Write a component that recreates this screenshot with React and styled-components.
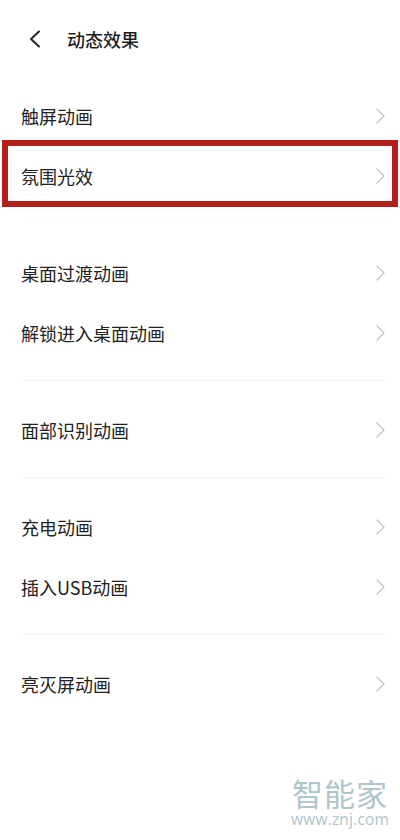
import React from "react";
import styled, { createGlobalStyle } from "styled-components";

const GlobalStyle = createGlobalStyle`
  html, body { margin: 0; padding: 0; background: #ffffff; }
  body { font-family: "Noto Sans CJK SC", "Noto Sans", sans-serif; }
  * { box-sizing: border-box; }
`;

const Screen = styled.div`
  position: relative;
  width: 400px;
  height: 840px;
  background: #ffffff;
  overflow: hidden;
`;

const Header = styled.header`
  display: flex;
  align-items: center;
  height: 77px;
  padding-left: 28px;
  gap: 26px;
`;

const BackButton = styled.button`
  display: flex;
  align-items: center;
  justify-content: center;
  width: 13px;
  height: 18px;
  padding: 0;
  border: 0;
  background: transparent;
  color: #262626;
`;

const Title = styled.h1`
  margin: 0;
  font-size: 18px;
  font-weight: 500;
  color: #1f1f1f;
  line-height: 1;
`;

const Group = styled.section`
  padding-top: ${(p) => p.$pt ?? 19}px;
  padding-bottom: ${(p) => p.$pb ?? 17}px;
`;

const Divider = styled.div`
  height: 1px;
  margin: 0 12px 0 22px;
  background: ${(p) => (p.$faint ? "#fbfbfb" : "#f4f4f4")};
`;

const Row = styled.div`
  position: relative;
  display: flex;
  align-items: center;
  justify-content: space-between;
  height: 60px;
  padding: 0 15px 0 21px;

  ${(p) =>
    p.$highlight &&
    `
    &::after {
      content: "";
      position: absolute;
      left: 2px;
      right: 2px;
      top: -6px;
      bottom: -1px;
      border: 6px solid #b31f1a;
      pointer-events: none;
    }
  `}
`;

const Label = styled.span`
  font-size: 18px;
  color: #222222;
  line-height: 1;
  letter-spacing: 0;
`;

const Chevron = styled.svg`
  width: 9px;
  height: 16px;
  color: #c6c6c6;
`;

const Watermark = styled.div`
  position: absolute;
  left: 291px;
  top: 776px;
  display: flex;
  flex-direction: column;
  align-items: center;
  color: #aec5ca;
  pointer-events: none;
`;

const MarkName = styled.div`
  font-size: 31px;
  line-height: 34px;
  letter-spacing: 1px;
  font-weight: 400;
`;

const MarkUrl = styled.div`
  font-family: "Open Sans", "Liberation Sans", sans-serif;
  font-size: 15.5px;
  line-height: 18px;
  letter-spacing: 0.2px;
`;

const BackIcon = () => (
  <svg width="13" height="18" viewBox="0 0 13 18" fill="none">
    <path d="M11 1.5 L3 9 L11 16.5" stroke="currentColor" strokeWidth="2" strokeLinecap="round" strokeLinejoin="round" />
  </svg>
);

const ArrowRight = () => (
  <Chevron viewBox="0 0 9 16" fill="none">
    <path d="M1 1 L8 8 L1 15" stroke="currentColor" strokeWidth="1.4" strokeLinecap="round" strokeLinejoin="round" />
  </Chevron>
);

const groups = [
  { items: ["触屏动画", "氛围光效"], pt: 9, pb: 13, highlight: 1 },
  { items: ["桌面过渡动画", "解锁进入桌面动画"], pt: 23, pb: 17, faint: true },
  { items: ["面部识别动画"] },
  { items: ["充电动画", "插入USB动画"] },
  { items: ["亮灭屏动画"] },
];

export default function App() {
  return (
    <>
      <GlobalStyle />
      <Screen>
        <Header>
          <BackButton aria-label="返回">
            <BackIcon />
          </BackButton>
          <Title>动态效果</Title>
        </Header>
        {groups.map((g, gi) => (
          <React.Fragment key={gi}>
            {gi > 0 && <Divider $faint={g.faint} />}
            <Group $pt={g.pt} $pb={g.pb}>
              {g.items.map((label, i) => (
                <Row key={label} $highlight={g.highlight === i}>
                  <Label>{label}</Label>
                  <ArrowRight />
                </Row>
              ))}
            </Group>
          </React.Fragment>
        ))}
        <Watermark>
          <MarkName>智能家</MarkName>
          <MarkUrl>www.znj.com</MarkUrl>
        </Watermark>
      </Screen>
    </>
  );
}
